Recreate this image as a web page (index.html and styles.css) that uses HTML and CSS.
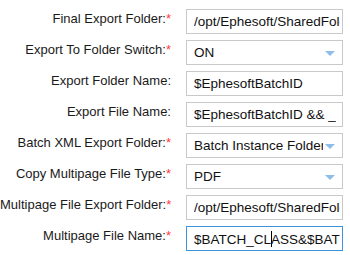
FILE: index.html
```html
<!DOCTYPE html>
<html>
<head>
<meta charset="utf-8">
<link rel="stylesheet" href="styles.css">
</head>
<body>
<div class="form">
  <label class="lbl">Final Export Folder:<span class="req">*</span></label>
  <div class="field"><span class="val">/opt/Ephesoft/SharedFolders</span></div>

  <label class="lbl">Export To Folder Switch:<span class="req">*</span></label>
  <div class="field select"><span class="val">ON</span><span class="arrow"></span></div>

  <label class="lbl">Export Folder Name:</label>
  <div class="field"><span class="val">$EphesoftBatchID</span></div>

  <label class="lbl">Export File Name:</label>
  <div class="field"><span class="val">$EphesoftBatchID &amp;&amp; _</span></div>

  <label class="lbl">Batch XML Export Folder:<span class="req">*</span></label>
  <div class="field select"><span class="val">Batch Instance Folder</span><span class="arrow"></span></div>

  <label class="lbl">Copy Multipage File Type:<span class="req">*</span></label>
  <div class="field select"><span class="val">PDF</span><span class="arrow"></span></div>

  <label class="lbl">Multipage File Export Folder:<span class="req">*</span></label>
  <div class="field"><span class="val">/opt/Ephesoft/SharedFolders</span></div>

  <label class="lbl">Multipage File Name:<span class="req">*</span></label>
  <div class="field focus"><span class="val">$BATCH_CL<span class="caret"></span>ASS&amp;$BAT</span></div>
</div>
</body>
</html>
```
FILE: styles.css
```css
html, body {
  margin: 0;
  padding: 0;
  background: #ffffff;
}
body {
  font-family: "Liberation Sans", Arial, sans-serif;
  font-size: 13px;
  color: #222222;
}
.form {
  display: grid;
  grid-template-columns: 171px 157px;
  column-gap: 15px;
  row-gap: 6px;
  padding-top: 9px;
}
.lbl {
  text-align: right;
  white-space: nowrap;
  color: #1a1a1a;
  line-height: 17px;
  padding-top: 1px;
  display: block;
}
.req {
  color: #ff3b3b;
}
.field {
  box-sizing: border-box;
  height: 25px;
  border: 1px solid #c9c9c9;
  padding-left: 7px;
  padding-right: 2px;
  display: flex;
  align-items: center;
  overflow: hidden;
  white-space: nowrap;
  position: relative;
  color: #111111;
  font-size: 13.5px;
}
.field .val {
  display: block;
  overflow: hidden;
  white-space: nowrap;
}
.select .val {
  flex: 1;
  margin-right: 17.5px;
}
.arrow {
  position: absolute;
  right: 7px;
  top: 10px;
  width: 0;
  height: 0;
  border-left: 5px solid transparent;
  border-right: 5px solid transparent;
  border-top: 5px solid #8ebde8;
}
.focus {
  border-color: #3d93dc;
}
.caret {
  display: inline-block;
  width: 1px;
  height: 16px;
  background: #000;
  vertical-align: -3px;
  margin-right: -1px;
}
```
